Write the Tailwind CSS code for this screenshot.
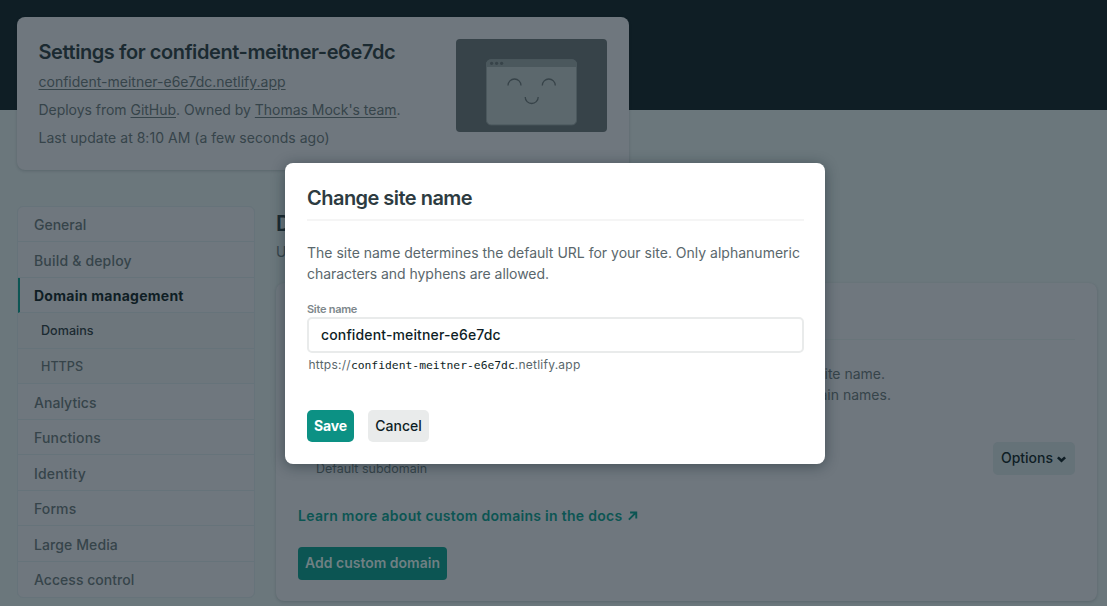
<!DOCTYPE html>
<html lang="en">
<head>
<meta charset="utf-8">
<title>Change site name</title>
<script src="https://cdn.jsdelivr.net/npm/@tailwindcss/browser@4"></script>
</head>
<body class="relative h-[606px] w-[1107px] overflow-hidden bg-[#6b777c] font-['Inter',sans-serif] text-[14px] text-[#36444a]">
<header class="h-[110px] bg-[#0f1e25] px-[17px] pt-[17px]">
  <section class="flex h-[153px] w-[612px] justify-between rounded-lg bg-[#6f777e] px-[22px] pt-[22px] shadow-[0_1px_3px_rgba(14,30,37,0.18)]">
    <div class="-ml-[0.500px]">
      <h1 class="h-[29px] text-[20px] leading-[26px] font-semibold tracking-[-0.420px] whitespace-nowrap text-[#1b2a31]"><span>Settings for confident-meitner-e6e7dc</span></h1>
      <p class="h-7 leading-7"><a class="underline underline-offset-2">confident-meitner-e6e7dc.netlify.app</a></p>
      <p class="h-7 leading-7 tracking-[-0.030px]"><span>Deploys from <a class="underline underline-offset-2">GitHub</a>. Owned by <a class="underline underline-offset-2">Thomas Mock's team</a>.</span></p>
      <p class="h-7 leading-7 tracking-[0.020px]"><span>Last update at 8:10 AM (a few seconds ago)</span></p>
    </div>
    <svg width="151" height="93" viewBox="0 0 151 93" fill="none">
      <rect width="151" height="93" rx="4" fill="#374349"/>
      <rect x="30.500" y="20.700" width="90" height="65.200" rx="4.500" fill="#5c686d" stroke="#4b585d"/>
      <path d="M30 28v-3a4.500 4.500 0 0 1 4.500-4.500h82a4.500 4.500 0 0 1 4.500 4.500v3z" fill="#4b585d"/>
      <g fill="#374349"><circle cx="35.600" cy="24.300" r="1.600"/><circle cx="40.600" cy="24.300" r="1.600"/><circle cx="45.600" cy="24.300" r="1.600"/></g>
      <path d="M52 46.500a6.500 6.500 0 0 1 13 0M86.300 46.500a6.500 6.500 0 0 1 13 0M69.200 58a6.500 6.500 0 0 0 13 0" stroke="#374349" stroke-width="1.300"/>
    </svg>
  </section>
</header>
<div class="flex gap-[21px] pl-[17px]">
  <nav class="mt-[96px] h-[392px] w-[238px] divide-y divide-[#66737a] rounded-md border border-[#66737a] bg-[#6f777e] font-medium">
    <a class="flex h-[35.200px] items-center pt-[0.400px] pl-4"><span>General</span></a>
    <a class="flex h-[35.500px] items-center pt-[1.500px] pl-4 tracking-[0.180px]"><span>Build &amp; deploy</span></a>
    <a class="flex h-[35.500px] items-center border-l-2 border-l-[#0c5553] pt-[1px] pl-[14px] font-bold tracking-[0.260px] text-[#0f1e25]"><span>Domain management</span></a>
    <a class="flex h-[35.500px] items-center bg-[#6d767c] pt-[3px] pl-[23px] text-[12.600px] text-[#1b2a31]"><span>Domains</span></a>
    <a class="flex h-[35.500px] items-center bg-[#6d767c] pt-[2.500px] pl-[23px] text-[12.600px]"><span>HTTPS</span></a>
    <a class="flex h-[35.500px] items-center pt-[1.500px] pl-4 tracking-[0.050px]"><span>Analytics</span></a>
    <a class="flex h-[35.500px] items-center pt-[1px] pl-4 tracking-[0.180px]"><span>Functions</span></a>
    <a class="flex h-[35.500px] items-center pt-[1.500px] pl-4 tracking-[0.180px]"><span>Identity</span></a>
    <a class="flex h-[35.500px] items-center pt-[1px] pl-4 tracking-[0.100px]"><span>Forms</span></a>
    <a class="flex h-[35.500px] items-center pt-[1.500px] pl-4 tracking-[0.100px]"><span>Large Media</span></a>
    <a class="flex h-[35.500px] items-center pt-[1px] pl-4 tracking-[0.030px]"><span>Access control</span></a>
  </nav>
  <main class="w-[821px] pt-[98px]">
    <h2 class="h-[32px] text-[21px] leading-[32px] font-semibold text-[#1b2a31]">D</h2>
    <p class="leading-6">U</p>
    <section class="mt-[19px] h-[318px] rounded-lg bg-[#6f777e] px-[22px] shadow-[0_1px_3px_rgba(14,30,37,0.18)]">
      <div class="h-[57px] border-b border-[#69757a]"></div>
      <p class="pt-[23px] pl-[526.500px] leading-[21px]"><span>ite name.</span><br><span class="-ml-[5px]">ain names.</span></p>
      <div class="mt-[37px] flex h-[33px] items-start justify-between">
        <p class="pt-[17px] pl-[18px] text-[12.500px] leading-5"><span>Default subdomain</span></p>
        <button class="flex h-[33px] w-[82px] items-center justify-center gap-1 rounded-[5px] bg-[#657278] pr-[1px] pb-[2px] font-medium text-[#0f1e25]"><span>Options</span><svg class="mt-[4px]" width="9" height="7" viewBox="0 0 9 7" fill="none" stroke="currentColor" stroke-width="2.600"><path d="M.9 1.400 4.500 4.800 8.100 1.400"/></svg></button>
      </div>
      <p class="mt-[31px] flex items-center gap-[6px] leading-5 font-semibold tracking-[0.285px] text-[#0c5553]"><span>Learn more about custom domains in the docs</span><svg width="9.500" height="9.500" viewBox="0 0 10 10" fill="none" stroke="currentColor" stroke-width="2"><path d="M.9 9 8 1.900M2.200 1.500h6.500v6.300"/></svg></p>
      <button class="mt-[21px] flex h-[33px] w-[149px] items-center justify-center rounded bg-[#0c5553] pb-[2px] font-semibold text-[#6f8083]"><span>Add custom domain</span></button>
    </section>
  </main>
</div>
<div role="dialog" class="absolute top-[163px] left-[285px] h-[301px] w-[540px] rounded-lg bg-white px-[22px] pt-[22px] text-[#5a676c] shadow-[0_2px_14px_rgba(14,30,37,0.45)]">
  <h2 class="h-[35.500px] w-[497px] border-b-2 border-[#f5f5f5] text-[20px] leading-[27px] font-semibold tracking-[-0.530px] text-[#2d3b41]"><span>Change site name</span></h2>
  <p class="pt-[21px] leading-[21px] whitespace-nowrap"><span>The site name determines the default URL for your site. Only alphanumeric</span><br><span class="tracking-[-0.040px]">characters and hyphens are allowed.</span></p>
  <label class="mt-[17px] block text-[11px] leading-4 font-semibold tracking-[-0.280px] text-[#7d878b]"><span>Site name</span></label>
  <div class="flex h-9 w-[497px] items-center rounded-[5px] border-2 border-[#e9ebeb] pl-3 font-medium tracking-[0.140px] text-[#0e1e25]"><span>confident-meitner-e6e7dc</span></div>
  <p class="mt-[2px] pl-[1.500px] text-[12px] leading-5 tracking-[0.240px] whitespace-nowrap"><span>https://</span><span class="font-['DejaVu_Sans_Mono',monospace] text-[11.350px] tracking-normal text-[#0e1e25]">confident-meitner-e6e7dc</span><span>.netlify.app</span></p>
  <div class="mt-[35px] flex gap-[14px]">
    <button class="h-8 w-[47px] rounded-[5px] bg-[#0c9184] font-bold tracking-[-0.100px] text-white"><span>Save</span></button>
    <button class="h-8 w-[61px] rounded-[5px] bg-[#e9ebeb] font-medium text-[#0e1e25]"><span>Cancel</span></button>
  </div>
</div>
</body>
</html>
